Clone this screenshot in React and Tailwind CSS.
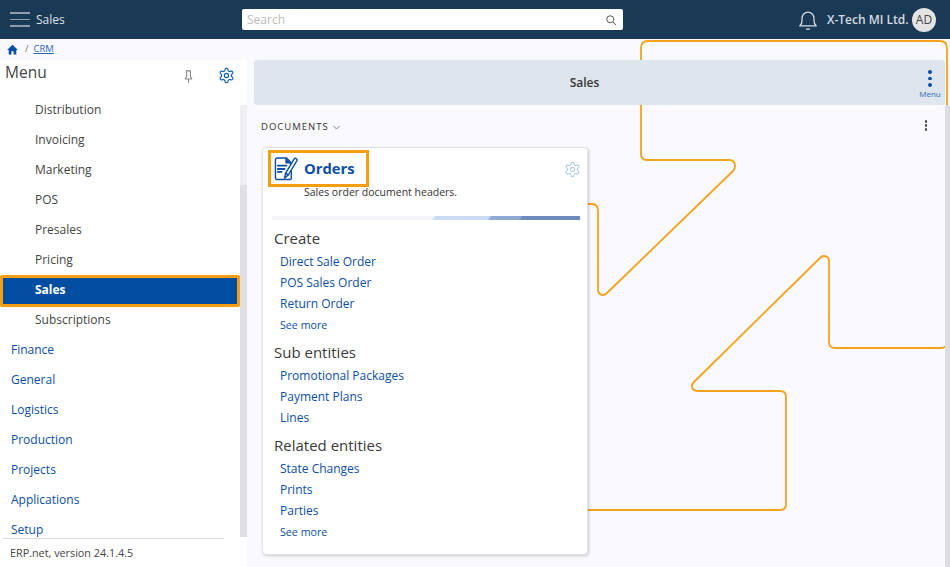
import React from "react";

const Gear = ({ cls }) => (
  <svg viewBox="0 0 24 24" fill="none" stroke="currentColor" strokeWidth="1.6" strokeLinecap="round" strokeLinejoin="round" className={cls}>
    <path d="M12.22 2h-.44a2 2 0 0 0-2 2v.18a2 2 0 0 1-1 1.73l-.43.25a2 2 0 0 1-2 0l-.15-.08a2 2 0 0 0-2.73.73l-.22.38a2 2 0 0 0 .73 2.73l.15.1a2 2 0 0 1 1 1.72v.51a2 2 0 0 1-1 1.74l-.15.09a2 2 0 0 0-.73 2.73l.22.38a2 2 0 0 0 2.73.73l.15-.08a2 2 0 0 1 2 0l.43.25a2 2 0 0 1 1 1.73V20a2 2 0 0 0 2 2h.44a2 2 0 0 0 2-2v-.18a2 2 0 0 1 1-1.73l.43-.25a2 2 0 0 1 2 0l.15.08a2 2 0 0 0 2.73-.73l.22-.39a2 2 0 0 0-.73-2.73l-.15-.08a2 2 0 0 1-1-1.74v-.5a2 2 0 0 1 1-1.74l.15-.09a2 2 0 0 0 .73-2.73l-.22-.38a2 2 0 0 0-2.73-.73l-.15.08a2 2 0 0 1-2 0l-.43-.25a2 2 0 0 1-1-1.73V4a2 2 0 0 0-2-2z" />
    <circle cx="12" cy="12" r="3" />
  </svg>
);

const sub = ["Distribution", "Invoicing", "Marketing", "POS", "Presales", "Pricing"];
const top = ["Finance", "General", "Logistics", "Production", "Projects", "Applications", "Setup"];

const Section = ({ title, items, more }) => (
  <div>
    <div className="text-[15px] leading-[20px] text-[#3a3a3a] pl-[11px] h-[20px]">{title}</div>
    <div className="mt-[3px] pl-[17px]">
      {items.map((t) => (
        <div key={t} className="h-[21px] leading-[21px] text-[12px] text-[#0b4ea2]">{t}</div>
      ))}
      {more && <div className="h-[21px] leading-[23px] text-[10.700px] text-[#0b4ea2]">See more</div>}
    </div>
  </div>
);

export default function App() {
  return (
    <div className="relative w-[950px] h-[567px] overflow-hidden bg-[#f9f9fe] flex flex-col font-['Open_Sans','Noto_Sans',sans-serif]">
      <header className="h-[39px] shrink-0 bg-[#1a3955] flex items-center text-[#dfe4e9]">
        <div className="w-[20px] ml-[10px] flex flex-col gap-[5px]">
          <div className="h-[1.5px] bg-[#8c9cab]" />
          <div className="h-[1.5px] bg-[#8c9cab]" />
          <div className="h-[1.5px] bg-[#8c9cab]" />
        </div>
        <div className="ml-[6px] text-[12px] w-[206px]">Sales</div>
        <div className="w-[381px] h-[21px] bg-white rounded-[2px] flex items-center justify-between pl-[5px] pr-[6px]">
          <span className="text-[12px] text-[#bcbcbc]">Search</span>
          <svg viewBox="0 0 24 24" fill="none" stroke="#555" strokeWidth="2" className="w-[12px] h-[12px]"><circle cx="10.5" cy="10.5" r="7" /><path d="M16 16l6 6" /></svg>
        </div>
        <svg viewBox="0 0 24 24" fill="none" stroke="#d5dbe1" strokeWidth="1.4" strokeLinejoin="round" className="ml-[174px] w-[22px] h-[22px]">
          <path d="M3 18.5c1.6-1.6 2.5-3 2.5-6V10a6.5 6.5 0 0 1 13 0v2.5c0 3 .9 4.400 2.500 6z" />
          <path d="M10 21.500c.8.700 3.200.700 4 0" />
        </svg>
        <div className="ml-[8px] text-[12px] font-semibold text-[#d5dbe1] whitespace-nowrap w-[85px]">X-Tech MI Ltd.</div>
        <div className="w-[24px] h-[24px] rounded-full bg-[#e4e4e4] text-[#444] text-[12px] flex items-center justify-center">AD</div>
      </header>

      <div className="h-[21px] shrink-0 flex items-center pl-[6px] text-[9.5px] text-[#777]">
        <svg viewBox="0 0 24 24" fill="#0b4ea2" className="w-[13px] h-[13px]"><path d="M10 21v-6h4v6h5v-8h3L12 3 2 13h3v8z" /></svg>
        <span className="ml-[6px]">/</span>
        <span className="ml-[5px] text-[#2d69b5] underline">CRM</span>
      </div>

      <div className="flex-1 flex min-h-0">
        <aside className="w-[247px] shrink-0 bg-white flex flex-col">
          <div className="h-[35px] shrink-0 flex items-start relative">
            <div className="ml-[5px] mt-[2px] text-[15.500px] leading-[20px] text-[#444]">Menu</div>
            <svg viewBox="0 0 24 24" fill="none" stroke="#888" strokeWidth="1.800" strokeLinejoin="round" className="ml-[134px] mt-[9px] w-[15px] h-[15px]">
              <path d="M8 3h8M9 3v9l-2 3v1h10v-1l-2-3V3M12 16v6" />
            </svg>
            <Gear cls="ml-[22px] mt-[7px] w-[17px] h-[17px] text-[#0b5bb5]" />
          </div>
          <div className="flex-1 flex min-h-0">
            <div className="flex-1 overflow-hidden">
              {sub.map((t) => (
                <div key={t} className="h-[30px] leading-[30px] pl-[35px] text-[12px] text-[#444]">{t}</div>
              ))}
              <div className="h-[32px] -mb-[2px] relative bg-[#034ea2] border-[3px] border-[#f59e12] rounded-[2px] pl-[32px] leading-[24px] text-[12px] font-bold text-white">Sales</div>
              <div className="h-[30px] leading-[30px] pl-[35px] text-[12px] text-[#444]">Subscriptions</div>
              {top.map((t) => (
                <div key={t} className="h-[30px] leading-[30px] pl-[11px] text-[12px] text-[#0b4ea2]">{t}</div>
              ))}
            </div>
            <div className="w-[7px] h-[432px] mt-[10px] bg-[#efeff3] flex flex-col shrink-0">
              <div className="h-[80px]" />
              <div className="flex-1 bg-[#dfdfe5]" />
            </div>
          </div>
          <div className="h-[29px] shrink-0 ml-[3px] mr-[23px] border-t border-[#dddddd] pl-[7px] text-[10.800px] leading-[27px] text-[#444] relative whitespace-nowrap">ERP.net, version 24.1.4.5</div>
        </aside>

        <main className="flex-1 flex flex-col min-w-0 pl-[7px]">
          <div className="h-[45px] w-[691px] shrink-0 bg-[#dfe5ee] rounded-[3px] flex items-center relative z-10">
            <div className="flex-1 text-center text-[12px] font-semibold text-[#333]">Sales</div>
            <div className="w-[30px] flex flex-col items-center pt-[4px]">
              <div className="flex flex-col gap-[3px]">
                <div className="w-[3.500px] h-[3.500px] rounded-full bg-[#0b4ea2]" />
                <div className="w-[3.500px] h-[3.500px] rounded-full bg-[#0b4ea2]" />
                <div className="w-[3.500px] h-[3.500px] rounded-full bg-[#0b4ea2]" />
              </div>
              <div className="text-[8px] leading-[10px] text-[#2d69b5] mt-[2px]">Menu</div>
            </div>
          </div>
          <div className="flex-1 flex min-h-0">
            <div className="w-[691px] shrink-0 flex flex-col">
              <div className="h-[43px] shrink-0 flex items-center pl-[7px] pr-[18px] justify-between">
                <div className="flex items-center mt-[1px] text-[9.500px] tracking-[1px] text-[#333]">
                  DOCUMENTS
                  <svg viewBox="0 0 12 12" fill="none" stroke="#555" strokeWidth="1" className="ml-[3px] w-[9px] h-[9px]"><path d="M2 4l4 4 4-4" /></svg>
                </div>
                <div className="flex flex-col gap-[1.500px] mb-[2px]">
                  <div className="w-[2.500px] h-[2.500px] rounded-full bg-[#444]" />
                  <div className="w-[2.500px] h-[2.500px] rounded-full bg-[#444]" />
                  <div className="w-[2.500px] h-[2.500px] rounded-full bg-[#444]" />
                </div>
              </div>
              <div className="relative z-10 -mt-[1px] ml-[8px] w-[326px] h-[408px] bg-white rounded-[4px] border border-[#e2e2e8] shadow-[1px_1px_3px_rgba(0,0,0,0.2)]">
                <div className="h-[68px]" />
                <div className="absolute left-[5px] top-[2px] w-[101px] h-[37px] border-[3px] border-[#f59e12] flex items-center pl-[3px] bg-white">
                  <svg viewBox="0 0 26 26" fill="none" stroke="#0b4ea2" strokeWidth="1.500" strokeLinejoin="round" strokeLinecap="round" className="w-[25px] h-[25px] shrink-0">
                    <path d="M17 8V6l-4-4H3a2 2 0 0 0-1.500 2v19a1.500 1.500 0 0 0 1.500 1.500h13a2 2 0 0 0 2-2v-7" />
                    <path d="M12.500 2.500V7h4.500" fill="#0b4ea2" />
                    <path d="M4 10h9M4 13.500h7M4 16.500h4" strokeWidth="2" />
                    <path d="M11 23l1-5 9-15c1-1.500 3.500 0 3 1.500l-9 15z" fill="white" />
                    <path d="M12 18l3 1.500" />
                  </svg>
                  <div className="ml-[5px] text-[14.800px] font-bold text-[#0b4ea2] leading-none">Orders</div>
                </div>
                <Gear cls="absolute left-[301px] top-[13px] w-[17px] h-[17px] text-[#b4cce8]" />
                <div className="absolute left-[41px] top-[37px] text-[10.500px] text-[#333]">Sales order document headers.</div>
                <div className="ml-[9px] mr-[7px] h-[4px] bg-[linear-gradient(120deg,#f5f6fb_0%,#f5f6fb_52%,#c9dcf2_53%,#c9dcf2_70%,#8ea9d4_71%,#8ea9d4_80%,#6c8cc0_81%,#6c8cc0_100%)]" />
                <div className="pt-[8px] flex flex-col gap-[7px]">
                  <div className="h-[107px]"><Section title="Create" items={["Direct Sale Order", "POS Sales Order", "Return Order"]} more /></div>
                  <div className="h-[86px]"><Section title="Sub entities" items={["Promotional Packages", "Payment Plans", "Lines"]} /></div>
                  <div><Section title="Related entities" items={["State Changes", "Prints", "Parties"]} more /></div>
                </div>
              </div>
            </div>
            <div className="relative z-10 w-[5px] bg-[#dcdce2] shrink-0" />
          </div>
        </main>
      </div>

      <svg className="absolute left-0 top-0 w-[950px] h-[567px] pointer-events-none" viewBox="0 0 950 567" fill="none" stroke="#f5a21d" strokeWidth="1.800">
        <path d="M588 204H592Q598 204 598 211V289Q598 295 603 295Q605 295 607 293L733 171Q735 169 735 166Q735 160 729 160H647Q641 160 641 154V48Q641 41 648 41H940Q947 41 947 48V342Q947 348 941 348H835Q829 348 829 342V262Q829 256 824 256Q822 256 820 258L694 382Q692 384 692 386Q692 391 698 391H780Q786 391 786 397V504Q786 510 780 510H588" />
      </svg>
    </div>
  );
}
